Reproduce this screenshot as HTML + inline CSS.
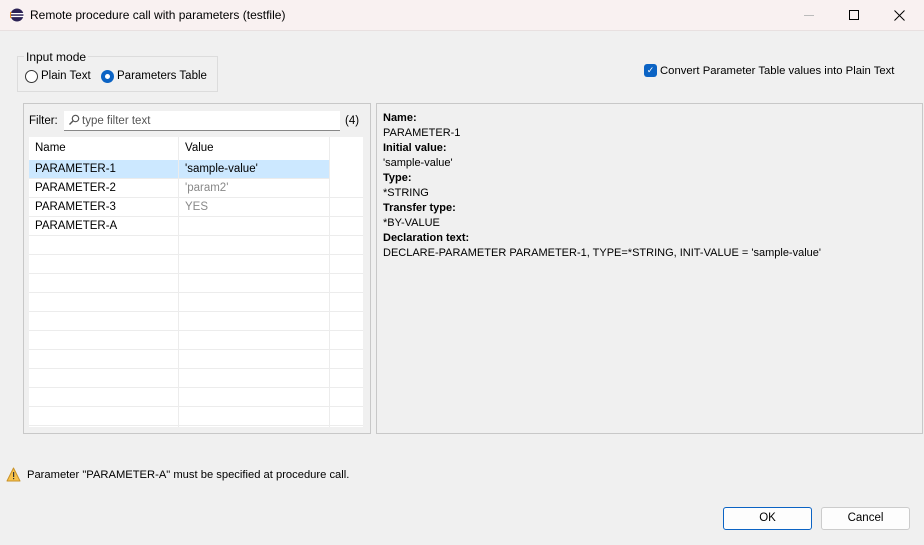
<!DOCTYPE html>
<html><head><style>
*{box-sizing:border-box;margin:0;padding:0}
body{width:924px;height:545px;background:#f0f0f0;font-family:"Liberation Sans",sans-serif;font-size:11.5px;color:#000;position:relative;overflow:hidden}
.a{position:absolute}
.title{left:0;top:0;width:924px;height:31px;background:#f9f1f1;border-bottom:1px solid #e8e0e0}
.row{position:absolute;left:29px;width:334px;height:19px;border-bottom:1px solid #ececec;background:#fff}
.row span{position:absolute;top:3px}
.c1{left:6px}.c2{left:156px}
.vl{position:absolute;top:137px;width:1px;height:290px;background:#ececec}
</style></head><body>
<div class="a title"></div>
<svg class="a" style="left:10px;top:8px" width="14" height="14" viewBox="0 0 14 14"><circle cx="7" cy="7" r="6.5" fill="#2c2255"/><rect x="0" y="5" width="14" height="1.3" fill="#fff"/><rect x="0" y="7.8" width="14" height="1.3" fill="#fff"/><path d="M1 4 A6.5 6.5 0 0 0 1 10" stroke="#f7941e" stroke-width="1.2" fill="none"/></svg>
<div class="a" style="left:30px;top:8px;font-size:12px">Remote procedure call with parameters (testfile)</div>
<div class="a" style="left:804px;top:15px;width:10px;height:1px;background:#bbb"></div>
<div class="a" style="left:849px;top:10px;width:10px;height:10px;border:1px solid #000"></div>
<svg class="a" style="left:894px;top:10px" width="11" height="11" viewBox="0 0 11 11"><path d="M0.5 0.5L10.5 10.5M10.5 0.5L0.5 10.5" stroke="#000" stroke-width="1"/></svg>

<div class="a" style="left:17px;top:56px;width:201px;height:36px;border:1px solid #dcdcdc"></div>
<div class="a" style="left:24px;top:50px;background:#f0f0f0;padding:0 2px;font-size:12px">Input mode</div>
<div class="a" style="left:25px;top:70px;width:13px;height:13px;border:1px solid #333;border-radius:50%;background:#fff"></div>
<div class="a" style="left:41px;top:70px">Plain Text</div>
<div class="a" style="left:101px;top:70px;width:13px;height:13px;border-radius:50%;background:#0b63c4"><div style="position:absolute;left:4px;top:4px;width:5px;height:5px;border-radius:50%;background:#fff"></div></div>
<div class="a" style="left:117px;top:70px">Parameters Table</div>

<div class="a" style="left:644px;top:64px;width:13px;height:13px;border-radius:3px;background:#0b63c4;color:#fff;font-size:9px;text-align:center;line-height:13px">✓</div>
<div class="a" style="left:660px;top:65px;font-size:11.3px">Convert Parameter Table values into Plain Text</div>

<div class="a" style="left:23px;top:103px;width:348px;height:331px;border:1px solid #c8c8c8"></div>
<div class="a" style="left:29px;top:115px">Filter:</div>
<div class="a" style="left:64px;top:111px;width:276px;height:20px;background:#fff;border-bottom:1px solid #888"></div>
<svg class="a" style="left:68px;top:114px" width="12" height="12" viewBox="0 0 12 12"><circle cx="7.5" cy="4.5" r="3.2" stroke="#555" fill="none" stroke-width="1.2"/><path d="M5.2 6.8L1.5 10.5" stroke="#555" stroke-width="1.4"/></svg>
<div class="a" style="left:82px;top:115px;color:#555">type filter text</div>
<div class="a" style="left:345px;top:115px">(4)</div>
<div class="a" style="left:29px;top:137px;width:334px;height:290px;background:#fff"></div>
<div class="a" style="left:35px;top:142px">Name</div>
<div class="a" style="left:185px;top:142px">Value</div>
<div class="row" style="top:160px;background:#cce8ff;width:301px"><span class="c1">PARAMETER-1</span><span class="c2">'sample-value'</span></div>
<div class="row" style="top:179px"><span class="c1">PARAMETER-2</span><span class="c2" style="color:#888">'param2'</span></div>
<div class="row" style="top:198px"><span class="c1">PARAMETER-3</span><span class="c2" style="color:#888">YES</span></div>
<div class="row" style="top:217px"><span class="c1">PARAMETER-A</span></div>
<div class="row" style="top:236px"></div><div class="row" style="top:255px"></div><div class="row" style="top:274px"></div><div class="row" style="top:293px"></div><div class="row" style="top:312px"></div><div class="row" style="top:331px"></div><div class="row" style="top:350px"></div><div class="row" style="top:369px"></div><div class="row" style="top:388px"></div><div class="row" style="top:407px"></div>
<div class="vl" style="left:178px"></div><div class="vl" style="left:329px"></div>

<div class="a" style="left:376px;top:103px;width:547px;height:331px;border:1px solid #c8c8c8"></div>
<div class="a" style="left:383px;top:111px;line-height:15px;font-size:11px">
<b>Name:</b><br>PARAMETER-1<br><b>Initial value:</b><br>'sample-value'<br><b>Type:</b><br>*STRING<br><b>Transfer type:</b><br>*BY-VALUE<br><b>Declaration text:</b><br>DECLARE-PARAMETER PARAMETER-1, TYPE=*STRING, INIT-VALUE = 'sample-value'</div>

<svg class="a" style="left:6px;top:467px" width="15" height="15" viewBox="0 0 15 15"><path d="M7.5 1 L14 14 L1 14 Z" fill="#f8c24a" stroke="#c8922a" stroke-linejoin="round"/><rect x="7" y="5" width="1.2" height="5" fill="#333"/><rect x="7" y="11" width="1.2" height="1.2" fill="#333"/></svg>
<div class="a" style="left:27px;top:469px;font-size:11.2px">Parameter "PARAMETER-A" must be specified at procedure call.</div>

<div class="a" style="left:723px;top:507px;width:89px;height:23px;background:#fdfdfd;border:1px solid #0b63c4;border-radius:3px;text-align:center;line-height:21px">OK</div>
<div class="a" style="left:821px;top:507px;width:89px;height:23px;background:#fdfdfd;border:1px solid #ccc;border-radius:3px;text-align:center;line-height:21px">Cancel</div>
</body></html>
